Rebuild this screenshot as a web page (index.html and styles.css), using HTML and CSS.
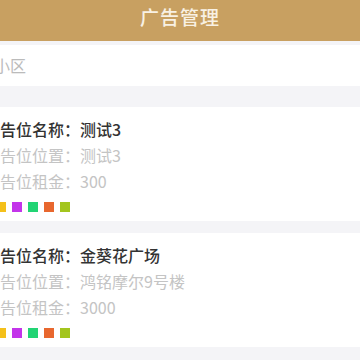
FILE: index.html
```html
<html lang="zh-CN">
<head>
    <meta charset="UTF-8">
    <meta name="viewport" content="width=device-width, initial-scale=1.0">
    <title>广告管理</title>
    <link rel="stylesheet" href="styles.css">
</head>
<body>

<div class="header">广告管理</div>

<div class="page">
    <!-- search box -->
    <div class="search">小区</div>

    <!-- ad list -->
    <div class="card">
        <div class="title">广告位名称：测试3</div>
        <div class="info">广告位位置：测试3</div>
        <div class="info">广告位租金：300</div>
        <div class="tags">
            <span class="tag yellow"></span>
            <span class="tag purple"></span>
            <span class="tag green"></span>
            <span class="tag orange"></span>
            <span class="tag lime"></span>
        </div>
    </div>

    <div class="card">
        <div class="title">广告位名称：金葵花广场</div>
        <div class="info">广告位位置：鸿铭摩尔9号楼</div>
        <div class="info">广告位租金：3000</div>
        <div class="tags">
            <span class="tag yellow"></span>
            <span class="tag purple"></span>
            <span class="tag green"></span>
            <span class="tag orange"></span>
            <span class="tag lime"></span>
        </div>
    </div>
</div>

</body>
</html>
```

FILE: styles.css
```css
body {
    margin: 0;
    background-color: #f4f4f7;
    font-family: "Noto Sans CJK SC", "Noto Sans", sans-serif;
    overflow: hidden;
}

.header {
    height: 41px;
    line-height: 34px;
    background-color: #c8a061;
    color: #f8f1e4;
    font-size: 19px;
    font-weight: 500;
    text-align: center;
    letter-spacing: 1px;
}

.page {
    margin-left: -26px;
    padding-top: 4px;
}

.search {
    background-color: #fff;
    height: 41px;
    line-height: 40px;
    padding-left: 20px;
    font-size: 16px;
    color: #bbb;
    margin-bottom: 21px;
}

.card {
    background-color: #fff;
    padding: 9px 10px 9px 10px;
    margin-bottom: 12px;
}

.title {
    font-size: 16px;
    line-height: 26px;
    color: #333;
    font-weight: 500;
}

.info {
    font-size: 16px;
    line-height: 26px;
    color: #c4c4c4;
}

.tags {
    display: flex;
    gap: 6px;
    margin-top: 8px;
    padding-left: 12px;
}

.tag {
    width: 10px;
    height: 10px;
}

.yellow { background-color: #f4c01a; }
.purple { background-color: #c334ea; }
.green  { background-color: #22d474; }
.orange { background-color: #e8672e; }
.lime   { background-color: #a3c51e; }
```
